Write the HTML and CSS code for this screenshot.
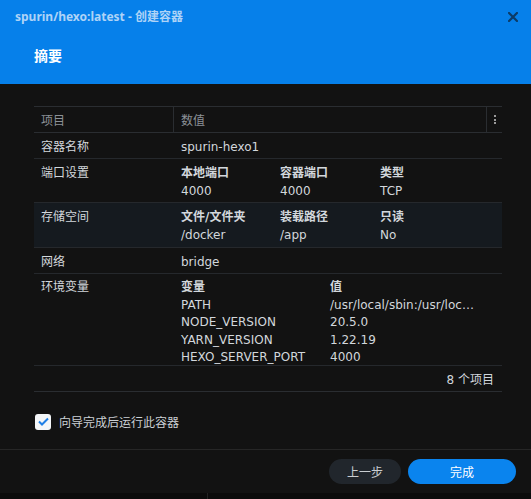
FILE: index.html
```html
<!DOCTYPE html>
<html lang="zh">
<head>
<meta charset="utf-8">
<link rel="stylesheet" href="styles.css">
</head>
<body>
<div class="dialog">
  <div class="header">
    <div class="titlebar">
      <span class="title">spurin/hexo:latest - 创建容器</span>
      <svg class="close" width="10" height="10" viewBox="0 0 10 10"><path d="M1 1L9 9M9 1L1 9" stroke="#0d3b66" stroke-width="2.2" stroke-linecap="square"/></svg>
    </div>
    <div class="step">摘要</div>
  </div>
  <div class="content">
    <div class="table">
      <div class="thead">
        <div class="c1 th">项目</div>
        <div class="c2 th">数值</div>
        <div class="kebab"><span></span><span></span><span></span></div>
      </div>
      <div class="tbody">
        <div class="row">
          <div class="c1">容器名称</div>
          <div class="c2">spurin-hexo1</div>
        </div>
        <div class="row">
          <div class="c1">端口设置</div>
          <div class="c2 sub">
            <div class="col w99"><b>本地端口</b><span>4000</span></div>
            <div class="col w100"><b>容器端口</b><span>4000</span></div>
            <div class="col"><b>类型</b><span>TCP</span></div>
          </div>
        </div>
        <div class="row hl">
          <div class="c1">存储空间</div>
          <div class="c2 sub">
            <div class="col w99"><b>文件/文件夹</b><span>/docker</span></div>
            <div class="col w100"><b>装载路径</b><span>/app</span></div>
            <div class="col"><b>只读</b><span>No</span></div>
          </div>
        </div>
        <div class="row">
          <div class="c1">网络</div>
          <div class="c2">bridge</div>
        </div>
        <div class="row env">
          <div class="c1">环境变量</div>
          <div class="c2 sub">
            <div class="col w149"><b>变量</b><span>PATH</span><span>NODE_VERSION</span><span>YARN_VERSION</span><span>HEXO_SERVER_PORT</span></div>
            <div class="col w150"><b>值</b><span>/usr/local/sbin:/usr/loc…</span><span>20.5.0</span><span>1.22.19</span><span>4000</span></div>
          </div>
        </div>
      </div>
      <div class="tfoot">8 个项目</div>
    </div>
    <label class="check">
      <span class="box"><svg width="11" height="9" viewBox="0 0 11 9"><path d="M1 4.5L4 7.5L10 1.5" fill="none" stroke="#1f7fe6" stroke-width="2"/></svg></span>
      <span>向导完成后运行此容器</span>
    </label>
  </div>
  <div class="footer">
    <button class="btn back">上一步</button>
    <button class="btn primary">完成</button>
  </div>
</div>
<div class="under"><div class="under-left"></div><div class="under-right"></div></div>
</body>
</html>
```

FILE: styles.css
```css
* { box-sizing: border-box; }
html, body { margin: 0; padding: 0; background: #0b0b0b; }
body {
  width: 531px;
  height: 499px;
  overflow: hidden;
  font-family: "DejaVu Sans", "Noto Sans CJK SC", sans-serif;
  font-size: 12px;
  color: #d2d7dc;
}
.dialog {
  width: 531px;
  height: 493px;
  background: #121212;
  display: flex;
  flex-direction: column;
}
.header {
  background: #0680ea;
  height: 84px;
  padding: 6px 13px 0 15px;
  font-family: "Noto Sans", "Noto Sans CJK SC", sans-serif;
}
.titlebar {
  display: flex;
  justify-content: space-between;
  align-items: center;
  height: 20px;
}
.title {
  font-weight: bold;
  color: #aed3f7;
  font-size: 12px;
}
.close { margin-top: 1px; }
.step {
  margin-top: 19px;
  margin-left: 19px;
  font-size: 14px;
  font-weight: bold;
  color: #ffffff;
}
.content {
  flex: 1;
  padding: 22px 29px 0 34px;
  border-bottom: 1px solid #262626;
}
.table {
  width: 468px;
  border-top: 1px solid #2a2d31;
  border-bottom: 1px solid #2a2d31;
}
.thead {
  display: flex;
  height: 26px;
  border-bottom: 1px solid #2a2d31;
  align-items: stretch;
}
.th {
  color: #8c9197;
  display: flex;
  align-items: center;
}
.thead .c2 {
  border-left: 1px solid #2a2d31;
  padding-left: 7px;
  flex: 1;
}
.kebab {
  width: 16px;
  border-left: 1px solid #2a2d31;
  display: flex;
  flex-direction: column;
  align-items: center;
  justify-content: center;
  gap: 1.5px;
}
.kebab span {
  width: 2px;
  height: 2px;
  background: #9a9a9a;
}
.tbody {
  height: 232px;
  overflow: hidden;
}
.row {
  display: flex;
  border-bottom: 1px solid #25282c;
  padding: 5px 0 2px;
  line-height: 18px;
}
.row.hl { background: #151a1f; padding-bottom: 3px; }
.row.env { line-height: 17.5px; padding-top: 5px; }
.c1 {
  width: 139px;
  padding-left: 7px;
  flex-shrink: 0;
}
.c2 {
  padding-left: 8px;
  flex: 1;
  min-width: 0;
}
.sub { display: flex; }
.col {
  display: flex;
  flex-direction: column;
  min-width: 0;
  white-space: nowrap;
}
.col b { font-weight: bold; }
.w99 { width: 99px; }
.w100 { width: 100px; }
.w149 { width: 149px; }
.w150 { width: 150px; }
.tfoot {
  height: 26px;
  border-top: 1px solid #25282c;
  display: flex;
  align-items: center;
  justify-content: flex-end;
  padding-right: 8px;
}
.check {
  display: flex;
  align-items: center;
  gap: 8px;
  margin-top: 21px;
  margin-left: 1px;
  color: #cbd0d5;
}
.box {
  width: 16px;
  height: 16px;
  background: #f4f6f8;
  border-radius: 3px;
  display: flex;
  align-items: center;
  justify-content: center;
}
.footer {
  height: 43px;
  display: flex;
  justify-content: flex-end;
  align-items: center;
  gap: 7px;
  padding: 0 15px 0 0;
}
.btn {
  height: 25px;
  border: none;
  border-radius: 13px;
  font-family: "Noto Sans CJK SC", sans-serif;
  font-size: 12px;
  padding: 0;
}
.back { width: 72px; background: #21262c; color: #c9cdd1; }
.primary { width: 108px; background: #0a84ee; color: #ffffff; }
.under {
  height: 6px;
  display: flex;
}
.under-left { width: 208px; border-right: 1px solid #222; }
.under-right { flex: 1; }
```
